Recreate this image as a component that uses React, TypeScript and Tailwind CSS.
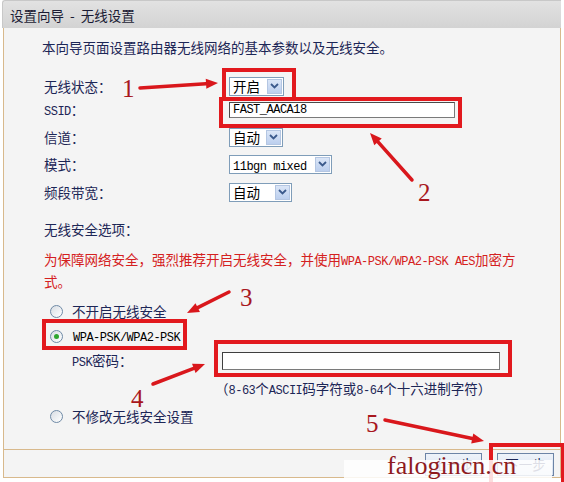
import React from 'react';

const navy = 'text-[#1c2656]';

const Mono: React.FC<{ children: React.ReactNode }> = ({ children }) => (
  <span className="font-['Liberation_Mono',monospace] text-[12px] tracking-[-0.5px]">{children}</span>
);

const Chevron = () => (
  <svg width="9" height="6" viewBox="0 0 9 6">
    <path d="M1 1 L4.5 4.5 L8 1" fill="none" stroke="#3b5a8c" strokeWidth="1.8" />
  </svg>
);

const Select: React.FC<{ children: React.ReactNode; className: string }> = ({ children, className }) => (
  <div className={`flex h-[19px] items-stretch border border-[#7f9db9] bg-white ${className}`}>
    <span className="flex-1 whitespace-nowrap pl-[3px] leading-[17px] text-black">{children}</span>
    <span className="m-[1px] flex w-[15px] items-center justify-center border border-[#b4c6e2] bg-gradient-to-b from-[#dbe6f7] to-[#bccfee]">
      <Chevron />
    </span>
  </div>
);

const Radio: React.FC<{ checked?: boolean }> = ({ checked }) => (
  <span className="flex h-[13px] w-[13px] items-center justify-center rounded-full border border-[#6f8aa6] bg-gradient-to-br from-[#d8dde3] to-white">
    {checked && <span className="h-[5px] w-[5px] rounded-full bg-[#2ea62e]" />}
  </span>
);

const Row: React.FC<{ label: React.ReactNode; h: string; children?: React.ReactNode }> = ({ label, h, children }) => (
  <div className={`flex items-center ${h}`}>
    <span className="w-[185px] shrink-0">{label}</span>
    {children}
  </div>
);

function arrow(x1: number, y1: number, x2: number, y2: number) {
  const a = Math.atan2(y2 - y1, x2 - x1);
  const L = 12;
  const W = 5;
  const bx = x2 - L * Math.cos(a);
  const by = y2 - L * Math.sin(a);
  const p = [
    [x2, y2],
    [bx + W * Math.sin(a), by - W * Math.cos(a)],
    [bx - W * Math.sin(a), by + W * Math.cos(a)],
  ]
    .map((q) => q.join(','))
    .join(' ');
  return (
    <g key={`${x1}-${y1}`}>
      <line x1={x1} y1={y1} x2={bx} y2={by} stroke="#d9171c" strokeWidth="3.5" strokeLinecap="round" />
      <polygon points={p} fill="#d9171c" />
    </g>
  );
}

const RedBox: React.FC<{ className: string }> = ({ className }) => (
  <div className={`absolute border-[4px] border-[#e2191e] ${className}`} />
);

const Num: React.FC<{ n: string; className: string }> = ({ n, className }) => (
  <span className={`absolute font-['Liberation_Serif',serif] text-[25px] leading-none text-[#a8171d] ${className}`}>{n}</span>
);

export default function App() {
  return (
    <div className={`relative h-[482px] w-[564px] overflow-hidden bg-white font-['Noto_Sans_CJK_SC','Liberation_Sans',sans-serif] text-[13.5px] ${navy}`}>
      {/* title */}
      <div className="ml-[2px] mr-[3px] h-[28px] rounded-tl-[3px] border-l border-t border-[#c8c8c8] bg-gradient-to-b from-[#e2e2e2] to-[#d3d3d3] pl-[7px] leading-[28px] text-[#1a1a33]">
        设置向导&nbsp;&nbsp;-&nbsp;&nbsp;无线设置
      </div>

      {/* panel */}
      <div className="mx-[3px] h-[421px] border-x border-[#d8b98c] bg-[#f4f4f4] pl-[40px]">
        <div className="-ml-[2px] pt-[10px] leading-[18px]">
          本向导页面设置路由器无线网络的基本参数以及无线安全。
        </div>
        <div className="mt-[18px]" />
        <Row label="无线状态：" h="h-[24px]">
          <Select className="w-[55px]">开启</Select>
        </Row>
        <Row label={<><Mono>SSID</Mono>：</>} h="h-[24px]">
          <div className="flex h-[16px] w-[226px] items-center border border-[#7a7a7a] border-l-[#4a4a4a] border-t-[#4a4a4a] bg-white pl-[3px] text-black">
            <Mono>FAST_AACA18</Mono>
          </div>
        </Row>
        <Row label="信道：" h="h-[30px]">
          <Select className="w-[54px]">自动</Select>
        </Row>
        <Row label="模式：" h="h-[24px]">
          <Select className="w-[103px]">
            <Mono>11bgn mixed</Mono>
          </Select>
        </Row>
        <Row label="频段带宽：" h="h-[32px]">
          <Select className="w-[63px]">自动</Select>
        </Row>
        <div className="mt-[10px] h-[22px] leading-[22px]">无线安全选项：</div>
        <div className="mt-[10px] w-[480px] leading-[19px] text-[#d42020]">
          为保障网络安全，强烈推荐开启无线安全，并使用<Mono>WPA-PSK/WPA2-PSK AES</Mono>加密方式。
        </div>
        <div className="mt-[8px] flex h-[24px] items-center">
          <span className="ml-[6px] mr-[9px]">
            <Radio />
          </span>
          不开启无线安全
        </div>
        <div className="flex h-[26px] items-center">
          <span className="ml-[6px] mr-[10px]">
            <Radio checked />
          </span>
          <span className="text-black">
            <Mono>WPA-PSK/WPA2-PSK</Mono>
          </span>
        </div>
        <div className="flex h-[24px] items-center pl-[28px]">
          <span className="w-[150px] shrink-0">
            <Mono>PSK</Mono>密码：
          </span>
          <div className="h-[18px] w-[278px] border border-[#7a7a7a] border-l-[#3f3f3f] border-t-[#3f3f3f] bg-white" />
        </div>
        <div className="mt-[6px] h-[18px] pl-[171px] text-[13.5px] leading-[18px]">
          （<Mono>8-63</Mono>个<Mono>ASCII</Mono>码字符或<Mono>8-64</Mono>个十六进制字符）
        </div>
        <div className="mt-[8px] flex h-[22px] items-center">
          <span className="ml-[6px] mr-[9px]">
            <Radio />
          </span>
          不修改无线安全设置
        </div>
      </div>

      {/* footer */}
      <div className="mx-[3px] flex h-[29px] justify-end gap-[15px] border-x border-y border-[#d8b98c] bg-[#f4f4f4] pr-[6px] pt-[3px]">
        <button className="h-[23px] w-[57px] border border-[#6c84a6] bg-gradient-to-b from-[#eef3fa] to-[#d6e0ee] text-[13.5px] text-[#1c2656]">
          上一步
        </button>
        <button className="h-[23px] w-[57px] border border-[#6c84a6] bg-gradient-to-b from-[#eef3fa] to-[#d6e0ee] text-[13.5px] text-[#1c2656]">
          下一步
        </button>
      </div>

      {/* annotations */}
      <svg className="pointer-events-none absolute left-0 top-0" width="564" height="482">
        {arrow(140, 88, 218, 83)}
        {arrow(412, 180, 370, 133)}
        {arrow(229, 292, 187, 313)}
        {arrow(153, 384, 205, 364)}
        {arrow(385, 420, 484, 441)}
      </svg>
      <RedBox className="left-[222px] top-[68px] h-[33px] w-[74px]" />
      <RedBox className="left-[219px] top-[97px] h-[31px] w-[243px]" />
      <RedBox className="left-[42px] top-[319px] h-[31px] w-[145px]" />
      <RedBox className="left-[214px] top-[340px] h-[37px] w-[298px]" />
      <RedBox className="left-[489px] top-[443px] h-[45px] w-[76px]" />
      <Num n="1" className="left-[122px] top-[76px]" />
      <Num n="2" className="left-[418px] top-[180px]" />
      <Num n="3" className="left-[240px] top-[285px]" />
      <Num n="4" className="left-[131px] top-[386px]" />
      <Num n="5" className="left-[366px] top-[411px]" />

      {/* watermark */}
      <div className="absolute left-[344px] top-[460px] h-[22px] w-[208px] bg-white/85" />
      <span className="absolute left-[387px] top-[451px] font-['Liberation_Serif',serif] text-[26px] leading-[30px] text-[#8e1b1f]">
        falogincn.cn
      </span>
    </div>
  );
}
